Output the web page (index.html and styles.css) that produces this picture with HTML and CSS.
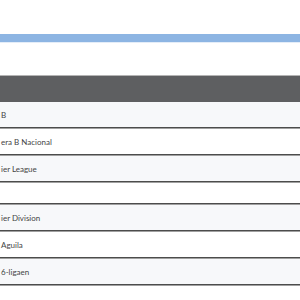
FILE: index.html
```html
<!DOCTYPE html>
<html>
<head>
<meta charset="utf-8">
<link rel="stylesheet" href="styles.css">
</head>
<body>
<div class="page">
  <div class="accent"></div>
  <div class="table">
    <div class="thead"></div>
    <div class="row odd"><span class="cell">B</span></div>
    <div class="row"><span class="cell">era B Nacional</span></div>
    <div class="row odd"><span class="cell">ier League</span></div>
    <div class="row empty"><span class="cell"></span></div>
    <div class="row odd"><span class="cell">ier Division</span></div>
    <div class="row"><span class="cell">Aguila</span></div>
    <div class="row odd"><span class="cell">6-ligaen</span></div>
  </div>
</div>
</body>
</html>
```
FILE: styles.css
```css
html, body {
  margin: 0;
  padding: 0;
  background: #ffffff;
}
.page {
  width: 300px;
  height: 300px;
  overflow: hidden;
  padding-top: 34px;
  box-sizing: border-box;
  font-family: Lato, "Liberation Sans", sans-serif;
}
.accent {
  height: 8px;
  background: #8db5e3;
  border-bottom: 1px solid #e4edf8;
}
.table {
  margin-top: 32px;
  display: flex;
  flex-direction: column;
}
.thead {
  height: 26px;
  background: #5e5f61;
  border-top: 1px solid #b4b4b4;
}
.row {
  height: 25px;
  display: flex;
  align-items: center;
  background: #ffffff;
  border-bottom: 2px groove #a0a0a0;
}
.row.odd {
  background: #f7f8fa;
}
.row.empty {
  height: 20px;
}
.cell {
  padding-left: 1px;
  font-size: 8px;
  color: #444444;
  white-space: nowrap;
}
```
